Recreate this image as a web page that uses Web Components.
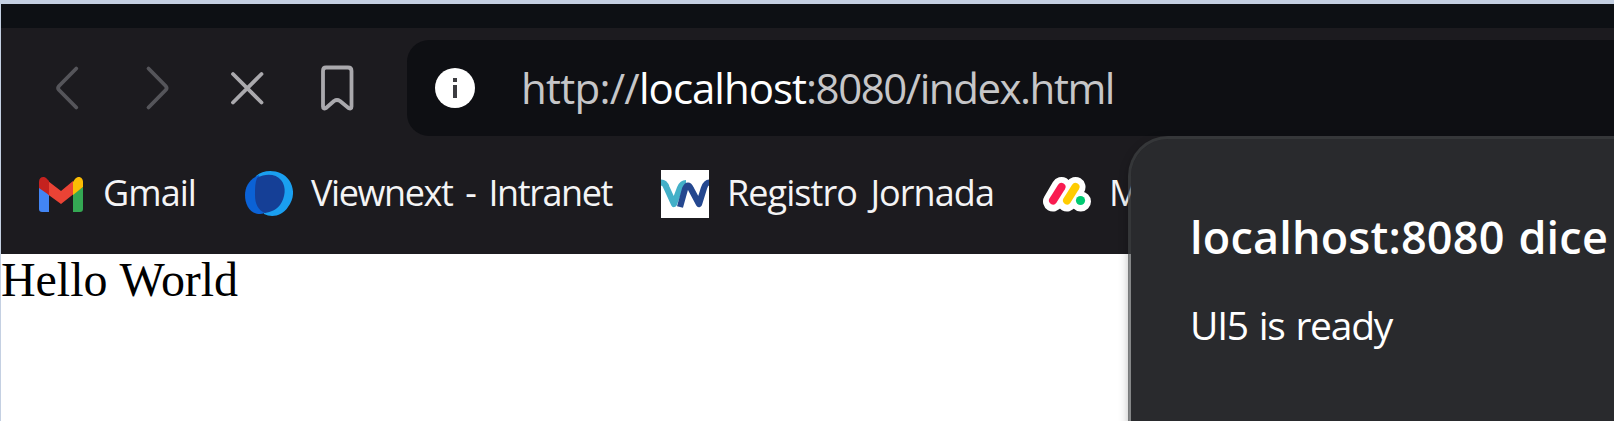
<!DOCTYPE html>
<html lang="es">
<head>
<meta charset="utf-8">
<title>localhost:8080</title>
<style>
html,body{margin:0;height:100%;overflow:hidden;background:#fff}
body{font-family:"Open Sans","Noto Sans",sans-serif}
</style>
</head>
<body>
<browser-window></browser-window>
<script>
const define=(name,html,Base=HTMLElement)=>{
  const t=document.createElement('template');t.innerHTML=html;
  customElements.define(name,class extends Base{
    constructor(){super();this.attachShadow({mode:'open'}).append(t.content.cloneNode(true));}
  });
};

// A single line of text whose tracking is adjusted to occupy the width attribute.
customElements.define('fit-text',class extends HTMLElement{
  constructor(){
    super();
    this.attachShadow({mode:'open'}).innerHTML='<style>:host{display:block;white-space:pre;flex:none}span{display:inline-block}</style><span><slot></slot></span>';
  }
  connectedCallback(){
    const span=this.shadowRoot.querySelector('span');
    const want=+this.getAttribute('width');
    const n=this.textContent.length;
    if(want&&n) span.style.letterSpacing=((want-span.getBoundingClientRect().width)/n)+'px';
  }
});

define('nav-button',`<style>
:host{display:flex;width:90px;height:96px;align-items:center;justify-content:center;flex:none;color:#aaa9ad}
:host([disabled]){color:#55555a}
::slotted(svg){width:60px;height:60px;fill:none;stroke:currentColor;stroke-width:3.8;stroke-linecap:round;stroke-linejoin:round}
</style><slot></slot>`);

define('address-bar',`<style>
:host{display:flex;flex:1;height:96px;box-sizing:border-box;align-items:center;padding-left:28px;background:#0e0f13;border-radius:22px 0 0 22px;font-size:42px;line-height:96px;color:#c6c6c8}
svg{width:40px;height:40px;flex:none;margin-right:46px}
b{display:block;font-weight:400;color:#fff}
</style>
<svg viewBox="0 0 40 40"><circle cx="20" cy="20" r="20" fill="#fff"/><path d="M18 10h4v4h-4zM18 17h4v13h-4z" fill="#3c3c40"/></svg>
<fit-text width="118">http://</fit-text><b><fit-text width="167">localhost</fit-text></b><fit-text width="308">:8080/index.html</fit-text>`);

define('bookmark-item',`<style>
:host{display:flex;align-items:center;gap:18px;flex:none}
::slotted(svg){width:48px;height:48px;flex:none;display:block}
div{font-size:36px;line-height:44px;color:#f4f4f5;padding-bottom:2px;word-spacing:5px}
</style><slot name="icon"></slot><div><slot></slot></div>`);

define('alert-dialog',`<style>
:host{display:block;box-sizing:border-box;background:#292a2d;background-clip:padding-box;border:3px solid rgba(68,70,72,.65);border-radius:40px 0 0 0;padding:64px 0 0 59px;color:#fff;box-shadow:0 4px 10px rgba(0,0,0,.25)}
h1{margin:0;font-size:45px;line-height:68px;font-weight:600;word-spacing:2px}
p{margin:24px 0 0;font-size:39px;line-height:60px;word-spacing:2px}
</style><h1><slot name="title"></slot></h1><p><slot></slot></p>`);

define('browser-window',`<style>
:host{display:flex;flex-direction:column;box-sizing:border-box;width:100vw;height:100vh;border-top:4px solid #c4d0e2;border-left:1px solid #c4d0e2;background:#fff;position:relative;overflow:hidden}
.tabs{height:24px;background:#0d1014;flex:none}
.chrome{height:226px;background:#1c1b1f;flex:none}
.nav{display:flex;padding:12px 0 0 21px}
.gap{width:25px;flex:none}
.marks{display:flex;gap:49px;padding:34px 0 0 36px}
.page{font-family:"Liberation Serif",serif;font-size:48px;line-height:52px;color:#000;word-spacing:1px}
alert-dialog{position:absolute;left:1127px;top:132px;width:520px;height:320px}
</style>
<div class="tabs"></div>
<div class="chrome">
 <div class="nav">
  <nav-button disabled><svg viewBox="0 0 60 60"><path d="M39.300 10.500 22 28a3 3 0 0 0 0 4L39.300 49.500"/></svg></nav-button>
  <nav-button disabled><svg viewBox="0 0 60 60"><path d="M21.500 10.500 38.700 28a3 3 0 0 1 0 4L21.500 49.500"/></svg></nav-button>
  <nav-button><svg viewBox="0 0 60 60"><path d="M16 16 44.500 44.500M44.500 16 16 44.500"/></svg></nav-button>
  <nav-button><svg viewBox="0 0 60 60"><path d="M19 9.500h22q3.500 0 3.500 3.500v35.500q0 3-3 1.500L33 43q-3-2-6 0l-8 7q-3 1.500-3-1.500V13q0-3.500 3-3.500z"/></svg></nav-button>
  <div class="gap"></div>
  <address-bar></address-bar>
 </div>
 <div class="marks">
  <bookmark-item>
   <svg slot="icon" viewBox="0 0 48 48"><path d="M2 17l10 7v18H5q-3 0-3-3z" fill="#4285f4"/><path d="M46 17l-10 7v18h7q3 0 3-3z" fill="#34a853"/><path d="M36 12l2-3c4-4 8-1 8 3v5l-10 8z" fill="#fbbc04"/><path d="M11 11l13 10L36 11v13.500L24 34l-13-9.500z" fill="#ea4335"/><path d="M2 12c0-5 5-6.500 8-3l2 2v14L2 18z" fill="#c5221f"/></svg>
   <fit-text width="93">Gmail</fit-text>
  </bookmark-item>
  <bookmark-item>
   <svg slot="icon" viewBox="0 0 48 48"><path d="M11 6C20-2 37 0 44 10c6 9 5 19-1 27-6 9-16 11-24 7z" fill="#1a9ff0"/><path d="M14 5C4 9 0 17 0 25c0 10 5 19 15 19 3 0 5-1 7-3z" fill="#0b62d6"/><path d="M12 8c9-5 19-4 24 2 6 7 4 18-1 25-4 5-9 7-15 8-7-3-10-9-10-18 0-7 0-12 2-17z" fill="#153f96"/></svg>
   <fit-text width="301">Viewnext - Intranet</fit-text>
  </bookmark-item>
  <bookmark-item>
   <svg slot="icon" viewBox="0 0 48 48"><path d="M0 0h48v48H0z" fill="#fff"/><g fill="none" stroke-width="6.200" stroke-linejoin="round"><path d="M0 12.500q4 0 5.500 5L13 34l6-16q2-5 6-5" stroke="#43b0c8"/><path d="M19 37l5-18q3-7 6 0l8 15 5-16q2-5.500 5-5.500" stroke="#24478f"/></g></svg>
   <fit-text width="267">Registro Jornada</fit-text>
  </bookmark-item>
  <bookmark-item>
   <svg slot="icon" viewBox="0 0 48 48" fill="none" stroke-linecap="round"><path d="M10 31.500 18.500 17M24 31.500 32.500 17M37.500 31.500h.5" stroke="#fff" stroke-width="20"/><path d="M10 30.500 18.500 17" stroke="#f91b50" stroke-width="8"/><path d="M24 30.500 32.500 17" stroke="#fc0" stroke-width="8"/><circle cx="37.500" cy="30.500" r="4.600" fill="#00ca72"/></svg>
   <fit-text>M</fit-text>
  </bookmark-item>
 </div>
</div>
<div class="page"><fit-text width="237">Hello World</fit-text></div>
<alert-dialog><fit-text slot="title" width="418">localhost:8080 dice</fit-text><fit-text width="202">UI5 is ready</fit-text></alert-dialog>`);
</script>
</body>
</html>
